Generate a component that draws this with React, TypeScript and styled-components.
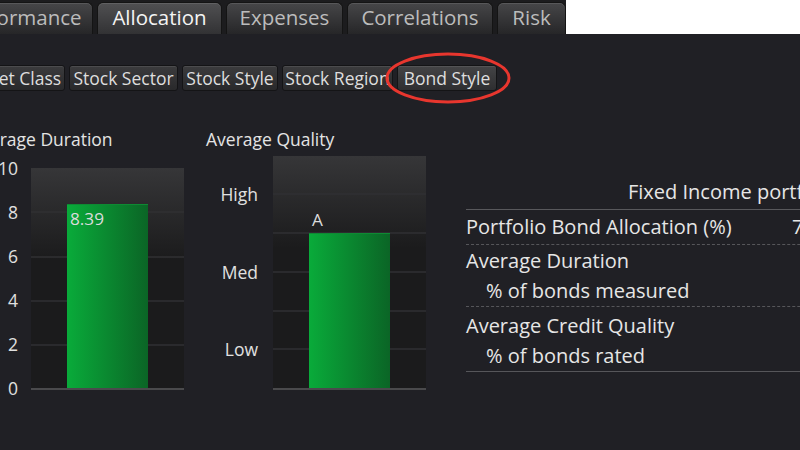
import React from 'react';
import styled, { createGlobalStyle } from 'styled-components';

const GlobalStyle = createGlobalStyle`
  html, body { margin: 0; padding: 0; background: #202025; overflow: hidden; }
  * { box-sizing: border-box; }
`;

const Page = styled.div`
  width: 800px;
  height: 450px;
  overflow: hidden;
  position: relative;
  background: #202025;
  font-family: "Open Sans", "Noto Sans", sans-serif;
  color: #e6e6e6;
  display: flex;
  flex-direction: column;
`;

const TabBar = styled.div`
  height: 34px;
  flex-shrink: 0;
  background: #ffffff;
  display: flex;
`;

const TabStrip = styled.div`
  display: flex;
  gap: 4px;
  margin-left: -54px;
  padding-top: 2px;
  background: #1c1c1e;
`;

const Tab = styled.div<{ $w: number; $active?: boolean }>`
  width: ${(p) => p.$w}px;
  flex-shrink: 0;
  border-radius: 6px 6px 0 0;
  border: 1px solid #141414;
  border-bottom: none;
  background: ${(p) =>
    p.$active
      ? 'linear-gradient(#505052, #323234)'
      : 'linear-gradient(#464648, #262628)'};
  box-shadow: inset 0 1px 0 rgba(255, 255, 255, 0.1);
  color: ${(p) => (p.$active ? '#f4f4f4' : '#bcbcbc')};
  font-size: 20.5px;
  display: flex;
  align-items: center;
  justify-content: center;
  padding-bottom: 3px;
  white-space: nowrap;
`;

const SubTabRow = styled.div`
  display: flex;
  gap: 4px;
  margin: 31px 0 0 -33px;
  height: 26px;
  flex-shrink: 0;
`;

const SubTab = styled.div<{ $w: number; $active?: boolean }>`
  width: ${(p) => p.$w}px;
  height: 26px;
  flex-shrink: 0;
  border-radius: 3px;
  border: 1px solid #141416;
  background: ${(p) =>
    p.$active
      ? 'linear-gradient(#444446, #2e2e30)'
      : 'linear-gradient(#3b3b3d, #29292b)'};
  box-shadow: inset 0 1px 0 rgba(255, 255, 255, 0.09);
  color: #dedede;
  font-size: 17.5px;
  display: flex;
  align-items: center;
  justify-content: center;
  padding-bottom: 1px;
  white-space: nowrap;
`;

const Highlight = styled.div`
  position: relative;
  display: flex;
`;

const Ring = styled.svg`
  position: absolute;
  left: -14px;
  top: -14px;
  width: 130px;
  height: 54px;
  overflow: visible;
  pointer-events: none;
`;

const Content = styled.div`
  display: flex;
  align-items: flex-start;
  margin: 37px 0 0 -30px;
`;

const ChartBlock = styled.div<{ $mr: number }>`
  display: flex;
  flex-direction: column;
  flex-shrink: 0;
  margin-right: ${(p) => p.$mr}px;
`;

const ChartTitle = styled.div`
  font-size: 17.5px;
  line-height: 22px;
  height: 22px;
  color: #e4e4e4;
  white-space: nowrap;
`;

const ChartBody = styled.div<{ $mt: number; $gap: number }>`
  display: flex;
  align-items: flex-start;
  margin-top: ${(p) => p.$mt}px;
  gap: ${(p) => p.$gap}px;
`;

const AxisCol = styled.div<{ $w: number; $h: number; $offset: number }>`
  width: ${(p) => p.$w}px;
  height: ${(p) => p.$h}px;
  margin-top: ${(p) => p.$offset}px;
  display: flex;
  flex-direction: column;
  justify-content: space-between;
  align-items: flex-end;
`;

const AxisLabel = styled.div`
  font-size: 17.5px;
  line-height: 20px;
  height: 20px;
  color: #e0e0e0;
  white-space: nowrap;
`;

const PlotSvg = styled.svg<{ $mt: number }>`
  display: block;
  flex-shrink: 0;
  margin-top: ${(p) => p.$mt}px;
`;

const Table = styled.div`
  width: 520px;
  flex-shrink: 0;
  margin-top: 49px;
  font-size: 20px;
  color: #e6e6e6;
`;

const HeaderRow = styled.div`
  line-height: 30px;
  padding: 0 0 2px 162px;
  border-bottom: 1px solid #58585c;
  white-space: nowrap;
`;

const Row = styled.div<{ $pt: number; $pb: number; $last?: boolean }>`
  display: grid;
  grid-template-columns: 326px 51px;
  padding: ${(p) => p.$pt}px 0 ${(p) => p.$pb}px;
  line-height: 30px;
  border-bottom: 1px ${(p) => (p.$last ? 'solid' : 'dashed')} #56565a;
  white-space: nowrap;
`;

const LabelCell = styled.div<{ $sub?: boolean }>`
  padding-left: ${(p) => (p.$sub ? 20 : 0)}px;
`;

const ValueCell = styled.div`
  text-align: right;
`;

type PlotProps = {
  id: string;
  height: number;
  lines: number[];
  barTop: number;
  label: string;
  labelY: number;
  mt: number;
};

const Plot: React.FC<PlotProps> = ({ id, height, lines, barTop, label, labelY, mt }) => {
  const w = 153;
  const axisY = height - 2;
  return (
    <PlotSvg $mt={mt} width={w} height={height} viewBox={`0 0 ${w} ${height}`}>
      <defs>
        <linearGradient id={`${id}-bg`} x1="0" y1="0" x2="0" y2="92" gradientUnits="userSpaceOnUse">
          <stop offset="0" stopColor="#363638" />
          <stop offset="1" stopColor="#1b1b1c" />
        </linearGradient>
        <linearGradient id={`${id}-bar`} x1="0" y1="0" x2="1" y2="0">
          <stop offset="0" stopColor="#09ab3a" />
          <stop offset="1" stopColor="#0b6526" />
        </linearGradient>
      </defs>
      <rect x="0" y="0" width={w} height={axisY} fill={`url(#${id}-bg)`} />
      {lines.map((y) => (
        <line key={y} x1="0" x2={w} y1={y} y2={y} stroke="#313133" strokeWidth="1.5" />
      ))}
      <rect x="36" y={barTop} width="81" height={axisY - barTop} fill={`url(#${id}-bar)`} />
      <rect x="36" y={barTop} width="81" height="1" fill="#0e8a33" />
      <rect x="0" y={axisY} width={w} height="2" fill="#4a4a4c" />
      <text x="39" y={labelY} fill="#dcdcdc" fontSize="17.2" fontFamily='"Open Sans", sans-serif'>
        {label}
      </text>
    </PlotSvg>
  );
};

const tabs = [
  { t: 'Performance', w: 147 },
  { t: 'Allocation', w: 125, active: true },
  { t: 'Expenses', w: 117 },
  { t: 'Correlations', w: 146 },
  { t: 'Risk', w: 69 },
];

const subTabs = [
  { t: 'Asset Class', w: 98 },
  { t: 'Stock Sector', w: 109 },
  { t: 'Stock Style', w: 96 },
  { t: 'Stock Region', w: 111 },
];

export default function App() {
  return (
    <>
      <GlobalStyle />
      <Page>
        <TabBar>
          <TabStrip>
            {tabs.map((tb) => (
              <Tab key={tb.t} $w={tb.w} $active={tb.active}>
                {tb.t}
              </Tab>
            ))}
          </TabStrip>
        </TabBar>

        <SubTabRow>
          {subTabs.map((s) => (
            <SubTab key={s.t} $w={s.w}>
              {s.t}
            </SubTab>
          ))}
          <Highlight>
            <SubTab $w={100} $active>
              Bond Style
            </SubTab>
            <Ring viewBox="0 0 130 54">
              <ellipse cx="65" cy="27" rx="61" ry="24" fill="none" stroke="#e8362e" strokeWidth="3" />
            </Ring>
          </Highlight>
        </SubTabRow>

        <Content>
          <ChartBlock $mr={22}>
            <ChartTitle>Average Duration</ChartTitle>
            <ChartBody $mt={8} $gap={13}>
              <AxisCol $w={48} $h={240} $offset={0}>
                {['10', '8', '6', '4', '2', '0'].map((l) => (
                  <AxisLabel key={l}>{l}</AxisLabel>
                ))}
              </AxisCol>
              <Plot id="dur" mt={10} height={222} lines={[44, 89, 133, 177]} barTop={36} label="8.39" labelY={57} />
            </ChartBody>
          </ChartBlock>

          <ChartBlock $mr={40}>
            <ChartTitle>Average Quality</ChartTitle>
            <ChartBody $mt={6} $gap={15}>
              <AxisCol $w={52} $h={175} $offset={28}>
                {['High', 'Med', 'Low'].map((l) => (
                  <AxisLabel key={l}>{l}</AxisLabel>
                ))}
              </AxisCol>
              <Plot id="qual" mt={0} height={234} lines={[38, 77, 116, 155, 193]} barTop={77} label="A" labelY={70} />
            </ChartBody>
          </ChartBlock>

          <Table>
            <HeaderRow>Fixed Income portfolio</HeaderRow>
            <Row $pt={2} $pb={2}>
              <LabelCell>Portfolio Bond Allocation (%)</LabelCell>
              <ValueCell>72.61</ValueCell>
            </Row>
            <Row $pt={1} $pb={0}>
              <LabelCell>Average Duration</LabelCell>
              <ValueCell>8.39</ValueCell>
              <LabelCell $sub>% of bonds measured</LabelCell>
              <ValueCell>94.3</ValueCell>
            </Row>
            <Row $pt={4} $pb={0} $last>
              <LabelCell>Average Credit Quality</LabelCell>
              <ValueCell>A</ValueCell>
              <LabelCell $sub>% of bonds rated</LabelCell>
              <ValueCell>93.8</ValueCell>
            </Row>
          </Table>
        </Content>
      </Page>
    </>
  );
}
